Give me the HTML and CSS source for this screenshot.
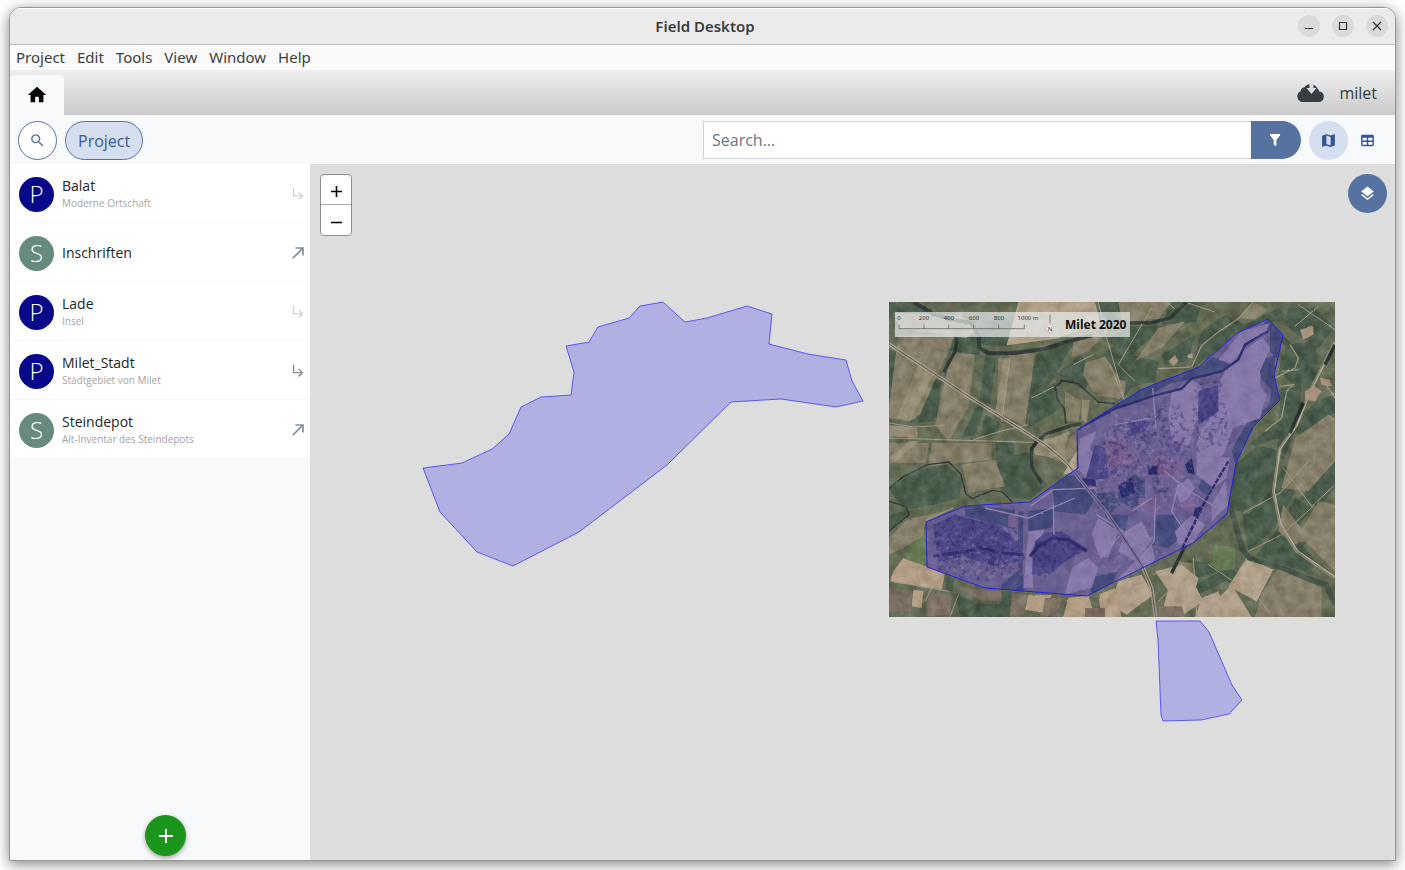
FILE: index.html
```html
<!DOCTYPE html>
<html lang="en">
<head>
<meta charset="utf-8">
<title>Field Desktop</title>
<link rel="stylesheet" href="styles.css">
</head>
<body>
<div class="window">
  <header class="titlebar">
    <h1 class="title">Field Desktop</h1>
    <div class="window-controls">
      <button class="window-button" aria-label="Minimize"><svg viewBox="0 0 22 22"><path d="M7 13.500h8"/></svg></button>
      <button class="window-button" aria-label="Maximize"><svg viewBox="0 0 22 22"><path d="M7.500 7.500h7v7h-7z"/></svg></button>
      <button class="window-button" aria-label="Close"><svg viewBox="0 0 22 22"><path d="M7 7l8 8M15 7l-8 8"/></svg></button>
    </div>
  </header>
  <nav class="menubar">
    <button>Project</button><button>Edit</button><button>Tools</button><button>View</button><button>Window</button><button>Help</button>
  </nav>
  <div class="tabbar">
    <a class="home-tab" href="#" aria-label="Home"><svg viewBox="0 0 24 24"><path d="M10 20V14H14V20H19V12H22L12 3 2 12H5V20Z"/></svg></a>
    <div class="sync">
      <svg class="cloud" viewBox="0 0 27 20"><path d="M6 19A5.700 5.700 0 0 1 3.500 8.200Q4 4.800 7.500 4.300 9 1.500 13 1.200 18 .8 20.500 5.500 21.800 7 22.500 8.500A5.300 5.300 0 0 1 21.500 19Z" fill="#373d43"/><path d="M12.500 0h4v5h3l-5 6-5-6h3z" fill="#dcdcdc"/></svg>
      <span>milet</span>
    </div>
  </div>
  <div class="toolbar">
    <button class="round outlined" aria-label="Find"><svg class="icon" viewBox="0 0 24 24"><path d="M9.500 3A6.500 6.500 0 0 1 16 9.500C16 11.110 15.410 12.590 14.440 13.730L14.710 14H15.500L20.500 19 19 20.500 14 15.500V14.710L13.730 14.440C12.590 15.410 11.110 16 9.500 16A6.500 6.500 0 0 1 9.500 3M9.500 5C7 5 5 7 5 9.500S7 14 9.500 14 14 12 14 9.500 12 5 9.500 5Z"/></svg></button>
    <button class="crumb">Project</button>
    <form class="search">
      <input type="text" placeholder="Search..." aria-label="Search">
      <button type="button" class="filter" aria-label="Filter"><svg class="icon-filter" viewBox="0 0 24 24"><path d="M14 12V19.880C14.040 20.180 13.940 20.500 13.710 20.710 13.320 21.100 12.690 21.100 12.300 20.710L10.290 18.700C10.060 18.470 9.960 18.160 10 17.870V12L4.210 4.620C3.870 4.190 3.950 3.560 4.380 3.220 4.570 3.080 4.780 3 5 3H19C19.220 3 19.430 3.080 19.620 3.220 20.050 3.560 20.130 4.190 19.790 4.620Z"/></svg></button>
    </form>
    <div class="views">
      <button class="round selected" aria-label="Map view"><svg class="icon" viewBox="0 0 24 24"><path d="M15 19L9 16.890V5L15 7.110M20.500 3L15 5.100 9 3 3.360 4.900C3.150 4.970 3 5.150 3 5.380V20.500A.5.5 0 0 0 3.660 20.970L9 18.900 15 21 20.640 19.100C20.850 19 21 18.850 21 18.620V3.500A.5.5 0 0 0 20.500 3Z"/></svg></button>
      <button class="round" aria-label="Table view"><svg class="icon" viewBox="0 0 24 24"><path d="M5 4H19A2 2 0 0 1 21 6V18A2 2 0 0 1 19 20H5A2 2 0 0 1 3 18V6A2 2 0 0 1 5 4M5 8V12H11V8H5M13 8V12H19V8H13M5 14V18H11V14H5M13 14V18H19V14H13Z"/></svg></button>
    </div>
  </div>
  <main class="content">
    <aside class="sidebar">
      <ul class="list">
        <li class="row"><span class="badge place">P</span><div class="label"><strong>Balat</strong><small>Moderne Ortschaft</small></div><button class="go faded" aria-label="Show children of Balat"><svg class="icon" viewBox="0 0 24 24"><path d="M19 15L13 21 11.580 19.580 15.170 16H4V4H6V14H15.170L11.580 10.420 13 9Z"/></svg></button></li>
        <li class="row"><span class="badge store">S</span><div class="label"><strong>Inschriften</strong></div><button class="go" aria-label="Open Inschriften"><svg class="icon-big" viewBox="0 0 24 24"><path d="M5 17.590L15.590 7H9V5H19V15H17V8.410L6.410 19Z"/></svg></button></li>
        <li class="row"><span class="badge place">P</span><div class="label"><strong>Lade</strong><small>Insel</small></div><button class="go faded" aria-label="Show children of Lade"><svg class="icon" viewBox="0 0 24 24"><path d="M19 15L13 21 11.580 19.580 15.170 16H4V4H6V14H15.170L11.580 10.420 13 9Z"/></svg></button></li>
        <li class="row"><span class="badge place">P</span><div class="label"><strong>Milet_Stadt</strong><small>Stadtgebiet von Milet</small></div><button class="go" aria-label="Show children of Milet_Stadt"><svg class="icon" viewBox="0 0 24 24"><path d="M19 15L13 21 11.580 19.580 15.170 16H4V4H6V14H15.170L11.580 10.420 13 9Z"/></svg></button></li>
        <li class="row"><span class="badge store">S</span><div class="label"><strong>Steindepot</strong><small>Alt-Inventar des Steindepots</small></div><button class="go" aria-label="Open Steindepot"><svg class="icon-big" viewBox="0 0 24 24"><path d="M5 17.590L15.590 7H9V5H19V15H17V8.410L6.410 19Z"/></svg></button></li>
      </ul>
      <button class="add" aria-label="Add resource"><svg viewBox="0 0 24 24"><path d="M12 5v14M5 12h14"/></svg></button>
    </aside>
    <section class="map" aria-label="Map">
      <svg class="canvas" viewBox="310 164 1085 696">
        <defs>
          <clipPath id="frame"><path d="M12 12h1338v945H12z"/></clipPath>
          <clipPath id="city"><path d="M576 396L675 333 767 276 810 257 943 206 1055 104 1150 63 1193 110 1166 230 1185 306 1103 386 1053 495 1025 648 925 734 675 859 605 893 300 871 127 807 124 671 240 625 435 611 580 511Z"/></clipPath>
          <filter id="grain" x="0" y="0" width="100%" height="100%" color-interpolation-filters="sRGB"><feTurbulence type="fractalNoise" baseFrequency=".03" numOctaves="5" seed="8"/><feColorMatrix values="1 1 0 0 -.5 1 1 0 0 -.5 1 1 0 0 -.5 0 0 0 0 1"/></filter>
          <filter id="ruins" x="0" y="0" width="100%" height="100%" color-interpolation-filters="sRGB"><feTurbulence type="fractalNoise" baseFrequency=".07" numOctaves="4" seed="21"/><feColorMatrix values="0 0 0 0 .2 0 0 0 0 .19 0 0 0 0 .27 5 0 0 0 -2.500" result="c"/><feComposite in="c" in2="SourceGraphic" operator="in"/></filter>
          <filter id="specks" x="0" y="0" width="100%" height="100%" color-interpolation-filters="sRGB"><feTurbulence type="fractalNoise" baseFrequency=".07" numOctaves="4" seed="40"/><feColorMatrix values="0 0 0 0 .8 0 0 0 0 .73 0 0 0 0 .68 0 6 0 0 -3.300" result="c"/><feComposite in="c" in2="SourceGraphic" operator="in"/></filter>
          <filter id="rough" x="-5%" y="-5%" width="110%" height="110%" color-interpolation-filters="sRGB"><feTurbulence type="fractalNoise" baseFrequency=".03" numOctaves="3" seed="3"/><feDisplacementMap in="SourceGraphic" scale="5" xChannelSelector="R" yChannelSelector="G"/><feGaussianBlur stdDeviation="1.500"/></filter>
        </defs>
        <g transform="translate(885 298) scale(.333333)">
          <g clip-path="url(#frame)">
            <g filter="url(#rough)">
            <path fill="#636b55" d="M0 0h1370v970H0z"/>
            <g fill="#4a5c4b">
              <path d="M12 12h75l50 40-107 0-18 10zM12 150l100 70L12 300zM120 230l50 20-15 110-60 10zM100 265l60 0-15 105-70 5zM210 110l65 0 10 60-60 10-40 60-10-20zM300 178l35 2-20 140-30-15zM270 330l30-10-30 90-40 10zM455 165l120-45-70 120-70 100-20 50zM440 290l70-35 20 75-100 60zM280 80l110-30-20 95-80-5zM300 350l45 25-10 35-50 5zM330 430l60 5-5 60-50-10zM510 230l80-60 30 60-20 50-80-50zM640 12h80l-20 65-55 0zM735 85h100l-110 100-60-60zM640 185l50-50 90 80-60 80-30-60zM830 170l100-60-20 80-70 10zM730 170l90 20-10 60-80 20z"/>
              <path d="M12 570l90-55 80-15 50 40-10 60-75 20-90 15-20-25zM12 650l50-10-5 30-45 25zM185 835l25 5-8 40-20-5zM212 885l60 30 70 5 5 37H225zM350 480l90-20 10 60 40 40-60 45-60-10-60-60zM350 880l30 0-5 77-40 0z"/>
              <path d="M860 12l90 0-15 60-110 10zM950 100l70-50 60 30 100-50 40 40-80 0-90 50-80 60-50 30zM1210 30h80l60 60-50 60-50-30-50-40zM1200 140l90-10 10 80-60 60-40-30zM1190 170l50 30-20 40-40-10zM1190 270l60-5-10 100-60 90-90-15 90-70zM1255 200l50 10-20 60-30 0zM1180 420l-60 20-70 60-10 130 50 20 80-100zM1200 500l30 80-60 110-80 70-20-120 60-30zM1180 690l30 0 90 110-40 20-150-45zM1290 310l60-20v60l-100 60-30-10zM1245 600l105-120v90l-50 60zM1230 600l50 30-50 70-40-30z"/>
              <path d="M930 860l100-50 30 20-120 60zM870 800l50-15 0 45-40 10zM1020 805l30 15 0 40-25-10zM925 790l60 5 20 25-70 20z"/>
            </g>
            <g fill="#857f6a">
              <path d="M40 110h170L105 350l-30 20-63-10v-30zM200 160l70 10-20 160-60 100-40-50zM340 182l110-10-25 130-5 80-85-40zM370 170l80-5-30 220-40-20zM570 90l90-30 10 40-60 60-50 20zM540 280l50 30-10 60-40 0zM600 195l60-20 40 60 5 70-80-25-30-50zM470 470l105-65v60l-40 30zM12 435h120l-10 60H12zM140 435h180l0 50-190 20zM230 500l100-15 30 80-110 20zM700 12h160l-40 50-110 10z"/>
              <path d="M80 660l100-20-60 40-10 60-50 0zM12 720l60-60 40 60-100 50zM820 90l80-20-70 80-80 40zM675 240l50 10-10 50-80-5zM1060 60l50-45 40 20-40 30zM1230 420l100-70 20 10v130l-80 90-80-10zM1195 620l60 80 30 20-60 20-45-40zM1300 610l50 10v200l-110-110zM1180 810l70 30 60 30v87h-200l20-70zM870 790l60 5-30 60-20 0z"/>
            </g>
            <g fill="#958c76">
              <path d="M100 200l50 20L75 370l-40-10zM355 185l20 0-25 180-20-15zM590 305l25 0-10 70-15-10zM445 440l110-40-15 45 0 40-90-15zM12 380l85 10v30l-85-5zM28 45l200 5 45 50-30 20-200-30zM12 480l60-50 30 0-70 60z"/>
            </g>
            <g fill="#b0a08a">
              <path d="M400 12h230l15 60-130 50-150 20zM555 490l20-30 0 60-40 10zM1085 780l80 35-50 95-85-45zM1000 900l40-40 60 97h-90zM810 820l80-20 50 40-10 40-80 0zM850 870l85 0 20 40-60 40-60-20zM700 850l70-20 35 60-80 60-50-30zM950 900l50-20 30 77h-100z"/>
            </g>
            <g fill="#b39d85">
              <path d="M55 780l125 45-10 50-155-25 10-30zM550 900l60-8 20 65h-95zM640 890l50-20 20 87h-60zM85 875l30 5-5 50-30-5zM430 890l70 0-20 55-60-10z"/>
            </g>
            <g fill="#7b6f61"><path d="M12 870l70 10-5 60H12zM230 870l120 10 0 30-60 0zM380 890l50 0-15 60H375zM130 890l70 0-5 60-75 5zM820 925l70 0 10 32h-80zM480 900l50 0-10 55h-50zM600 930h60v27h-60z"/></g>
            <path fill="#657a52" d="M75 735l45-20 5 90-60-20zM990 740l60 10 0 60-40 10-35-20z"/>
            <g fill="none" stroke="#a59a84" stroke-width="3">
              <path d="M12 420l260 8 180 5M265 425l80-25 85-20M12 375l75 12 90-5M375 182l-25 190M640 12l20 90 55 190M800 30l-100 170 50 50M675 200l45 110M900 12l90 30M845 12l25 20M1230 85l70-60M1240 20l110 75M1190 220l50-5M1075 645l110-60 90-100M1195 510l85 115 65-60M1090 760l100-50 100-90M925 780l10 175M1095 865l60 80M860 870l-40 40M20 850l170 30M100 800l-10 60M220 890l-25 67M140 870l-20 40M805 830l60-20M970 800l90 60M440 300l80-40M565 200l60-30"/>
            </g>
            <g fill="none" stroke="#333c38" stroke-linejoin="round">
              <path stroke-width="12" d="M85 12l60 35 55 18 60 10 22 40 0 35 30 16 70 0 100-14 60-20 80-20"/>
              <path stroke-width="10" d="M735 75l60 0 60-15 50-48M215 118l-4 40-35 65"/>
              <path stroke-width="5" d="M690 317l-50-5-60-55-50-10-20 20 8 40 20 25 5 45"/>
              <path stroke-width="10" d="M590 377l-30 5-75 25-30 25-15 20 0 55 30 50"/>
              <path stroke-width="4" d="M12 570l45-35 70-35 65-8 35 35 15 60 20 15 60-25 30 5 25 25 20 30M12 700l60-50-10-25-50-15"/>
            </g>
            <path fill="none" stroke="#465648" stroke-width="16" d="M1050 480l-12 150 35 125 20 25 100 30 70 30 60 20 27 60M1190 120l50 50 60 70M1255 312l-65 170"/>
            <path fill="none" stroke="#a0947c" stroke-width="4" d="M1105 12l-45 50-60 40-50 40-30 65-100 5M1185 265l40-5-20 20-15 80-50 40M1215 140l25 40-10 30-60 30M125 665l80-35M1350 300l-40-60"/>
            <path fill="none" stroke="#8a8471" stroke-width="9" d="M1350 130l-75 150-40 100-50 70-20 130 20 100 50 80 115 80"/>
            <path fill="none" stroke="#beb3a0" stroke-width="3" d="M1350 135l-75 150-40 100-50 70-17 125 20 98 50 80 115 80"/>
            <path fill="none" stroke="#29332f" stroke-width="10" d="M1255 315l-40 90M1350 140l-30 60M900 745l-40 80"/>
            <path fill="#a8937f" d="M1260 280l30-15 20 15-20 30-30-5zM1245 95l40-10 0 25-30 15zM850 190l20-20 10 20-15 15zM908 170l15-5 0 15-15 0zM735 840l30-5 5 25-30 5zM1305 240l30 5 5 20-30-5z"/>
            </g>
            <g clip-path="url(#city)">
              <g filter="url(#rough)">
              <path fill="#8d8280" d="M0 0h1370v970H0z"/>
              <g fill="#586660"><path d="M576 396l100-65 100-65 170-60 40-30 50 30-70 30-110 20-90 55-190 60zM1145 60l50 50-20 70-20-20 0-60-20-20zM1120 190l50-20 0 50 20 80-80 85-60 110-10-40 50-90 60-40 10-50-30-30zM975 185l25-5 35 20-20 20-60 15zM500 540l80-10 60 60-40 60-90-10zM430 640l80-10-10 60-70 10zM240 620l150 15 0 60-150-40zM625 590l60-10 20 40-40 40zM700 560l50-30 30 20 0 60-40 20-40-20zM810 650l60 0 40 50-60 50-50-10zM950 540l40-10-20 70-30-30zM350 860l60-50 10 80h-70zM400 640l15 0-2 180-15-20zM670 650l60 0-10 60zM610 840l90-20-20 40-60 30z"/></g>
              <g fill="#b5a6a2"><path d="M1000 185l70-85 85-25-15 30-50 30-50 60zM1025 210l60-60 50-30 20 30-30 70 0 40 20 30-20 70-80 30-30 80-50 30-30-60 40-130zM860 280l60-35 30 20-10 80-30 100-50-20-10-70zM585 420l50-20-20 50 40 70 0 30-50-10-30-30zM935 460l100 20-10 60-40 30-50-40zM430 700l50-5-40 60 5 115-30 0zM640 660l60 40-30 80-30-10-20-60zM720 700l50-30 30 60-50 60-50-30zM740 800l60-60 10 40-30 70-110 20zM560 810l50-30 30 30-20 60-80 20zM870 570l40-30 20 30-40 60zM870 700l50-50 40 30-40 60-40 0zM980 620l40-70 10 70-50 50z"/></g>
              <g fill="#a0827f"><path d="M370 650l25 0 0 40-25-5zM660 430l50-20 50 80-90 20zM800 470l80 10 20 40-40 20-70-20zM885 615l30-15 30 30-30 20zM760 600l60 0-10 40-50-10z"/></g>
              <g fill="#625e70"><path d="M145 680l65-30 60 15 80 20 60 60 10 40-90 20-100-30-70 20zM450 730l30-25 50-5 80 55-50 20-60 50-60 5zM940 280l60-20 0 80-60 40zM630 440l30 10 10 90-70 10zM740 370l60 0-20 30-60 20zM700 560l50-25 10 60-40 10z"/></g>
              <path fill="none" stroke="#c1b6ac" stroke-width="4" d="M812 600l-5 130-50 60M435 625l70-50 130-5M505 620l2 90M645 780l70-80-80-50M690 380l110-20M300 630l130 30 140-60M880 560l-20 80 60 90M740 640l60-40M840 520l60 50 80 50M803 270l10 120"/>
              <path fill="none" stroke="#39404d" stroke-width="7" d="M580 392l110-60 120-40 80-20 30-30 90-22 50-35 20-45 50-30 20-10"/>
              <path fill="none" stroke="#3d3b4f" stroke-width="9" d="M145 775l100-15 45-10 55 15 70 5M435 775l25-30 40-25 50 5 55 35"/>
              <path fill="none" stroke="#3b3a48" stroke-width="7" stroke-dasharray="16 4" d="M1030 490l-70 120-105 215"/>
              <path fill="#323c4b" d="M700 565l40-25 10 45-40 15zM787 505l30 0 0 25-25 0zM585 540l45 5 5 20-50-5zM900 500l20-20 10 50-20-5zM930 630l20-5-10 30-15 0z"/>
              </g>
              <path filter="url(#ruins)" opacity=".42" d="M145 680l80-30 170 50 15 110-110 45-150-30zM440 750l50-50 120 60-70 30-60 50-30-10zM650 400l230-90 50 140-60 60-100 50-110-40zM930 260l80-15 30 190-80 20-40-90zM800 540l50 0 0 60-40 0z"/>
              <path filter="url(#specks)" opacity=".35" d="M150 690h260v150H150zM660 360l240-80 90 180-60 180H620zM620 680h200v150H620z"/>
            </g>
            <path fill="none" stroke="#a49b8a" stroke-width="11" d="M12 138L250 295 410 395 480 440 545 495 670 650 770 800 800 870 812 957"/>
            <path fill="none" stroke="#5c5551" stroke-width="3" d="M12 138L250 295 410 395 480 440 545 495 670 650 770 800 800 870 812 957"/>
            <path class="relief" filter="url(#grain)" d="M12 12h1338v945H12z"/>
            <path fill="#e8ecec" opacity=".7" d="M30 42h705v75H30z"/>
            <path fill="none" stroke="#555" stroke-width="2" d="M42 80v12h376V80M117 80v12M191 80v12M266 80v12M341 80v12M495 50v26"/>
            <path fill="#fff" fill-opacity=".5" stroke="#999" stroke-width="1" d="M480 92l15-14 15 14-15 14z"/>
          </g>
        </g>
        <g class="scale-text"><text x="899" y="320">0</text><text x="924" y="320">200</text><text x="949" y="320">400</text><text x="974" y="320">600</text><text x="999" y="320">800</text><text x="1028" y="320">1000 m</text><text x="1050" y="331">N</text></g>
        <text class="map-title" x="1065" y="329">Milet 2020</text>
        <path class="area over-image" d="M1077 430L1110 409 1141 390 1155 384 1199 367 1237 333 1268 319 1283 335 1274 375 1280 400 1253 427 1236 463 1227 514 1193 543 1110 584 1087 596 985 588 927 567 926 522 965 506 1030 502 1078 468Z"/>
        <path class="area" d="M423 468L462 463 492 449 509 434 521 407 541 397 571 395 574 372 566 346 589 342 598 327 629 318 640 306 663 302 685 322 707 318 747 306 772 314 769 344 808 354 846 360 852 381 863 401 836 407 781 399 731 402 667 465 579 532 513 566 477 552 440 512Z"/>
        <path class="area" d="M1156 621H1200L1209 632 1232 685 1242 700 1229 714 1201 720 1163 721 1161 715 1158 640Z"/>
      </svg>
      <div class="zoom"><button aria-label="Zoom in"><svg viewBox="0 0 30 29"><path d="M15.500 11v11M10 16.500h11"/></svg></button><button aria-label="Zoom out"><svg viewBox="0 0 30 29"><path d="M10 16.500h11"/></svg></button></div>
      <button class="round layers" aria-label="Layers"><svg viewBox="0 0 24 24"><path d="M12 16L19.360 10.270 21 9 12 2 3 9 4.630 10.270M12 18.540L4.620 12.810 3 14.070 12 21.070 21 14.070 19.370 12.800Z"/></svg></button>
    </section>
  </main>
</div>
</body>
</html>
```
FILE: styles.css
```css
* { box-sizing: border-box; }
body {
  margin: 0;
  height: 100vh;
  padding: 7px 9px 9px;
  display: flex;
  overflow: hidden;
  background: #fff;
  color: #212529;
  font-family: "Open Sans", "Noto Sans", sans-serif;
  font-size: 16px;
}
button { margin: 0; padding: 0; border: 0; background: none; color: inherit; font: inherit; }
svg { display: block; fill: currentColor; }

.window {
  flex: 1;
  min-width: 0;
  display: flex;
  flex-direction: column;
  overflow: hidden;
  border: 1px solid #979797;
  border-radius: 12px 12px 0 0;
  background: #f8f9fb;
  box-shadow: 0 3px 14px rgba(0, 0, 0, .5);
}
.titlebar {
  display: grid;
  grid-template-columns: 1fr auto 1fr;
  align-items: center;
  height: 37px;
  padding: 0 7px 1px 12px;
  border-top: 1px solid #fff;
  border-bottom: 1px solid #bababa;
  background: #ebebeb;
  color: #3d3d3d;
}
.title { grid-column: 2; margin: 0; font: 600 15px/20px "Noto Sans", sans-serif; }
.window-controls { display: flex; justify-content: flex-end; gap: 12px; }
.window-button { width: 22px; height: 22px; border-radius: 50%; background: #dadada; }
.window-button svg { fill: none; stroke: #333; stroke-width: 1.2; }
.menubar {
  display: flex;
  align-items: center;
  gap: 12px;
  height: 25px;
  padding: 0 0 2px 6px;
  background: #fafafa;
  color: #3d3d3d;
  font: 15px/20px "Noto Sans", sans-serif;
}
.tabbar {
  display: flex;
  align-items: flex-end;
  justify-content: space-between;
  height: 45px;
  background: linear-gradient(#eee, #cacaca);
}
.home-tab {
  display: grid;
  place-items: center;
  width: 54px;
  height: 40px;
  border-radius: 4px 4px 0 0;
  background: #f8f9fb;
  color: #000;
}
.home-tab svg { width: 22px; height: 22px; }
.sync { display: flex; align-items: center; gap: 15px; height: 45px; padding-right: 18px; color: #373d43; }
.cloud { width: 27px; height: 20px; }

.toolbar { display: flex; align-items: center; gap: 8px; height: 49px; padding: 2px 8px 0; color: #2f5597; }
.round { display: grid; place-items: center; flex: none; width: 39px; height: 39px; border-radius: 50%; }
.icon { width: 17px; height: 17px; }
.icon-filter { width: 16px; height: 16px; }
.icon-big { width: 20px; height: 20px; }
.outlined { border: 1px solid #5572a1; background: #fff; color: #5572a1; }
.crumb { height: 39px; padding: 0 12px; border: 1px solid #5572a1; border-radius: 20px; background: #d6dff0; color: #375a94; }
.search { display: flex; width: 598px; height: 39px; padding-bottom: 1px; margin-left: auto; }
.search input {
  flex: 1;
  min-width: 0;
  padding: 0 8px;
  border: 1px solid #ced4da;
  border-right: 0;
  border-radius: 0;
  background: #fff;
  font: inherit;
}
.search input::placeholder { color: #6c757d; opacity: 1; }
.filter { display: grid; place-items: center; width: 50px; padding-right: 2px; border-radius: 0 19px 19px 0; background: #5572a1; color: #fff; }
.views { display: flex; }
.selected { background: #d6dff0; }

.content { flex: 1; min-height: 0; display: flex; }
.sidebar { flex: none; width: 300px; display: flex; flex-direction: column; justify-content: space-between; align-items: center; padding-bottom: 4px; }
.list { width: 100%; margin: 0; padding: 0; list-style: none; }
.row { display: flex; align-items: center; height: 59px; padding: 3px 0 0 9px; border-bottom: 1px solid #f5f6f7; background: #fff; }
.badge { width: 35px; height: 35px; border-radius: 50%; color: #fff; font-size: 24px; font-weight: 300; line-height: 34px; text-align: center; }
.place { background: #08088a; }
.store { background: #668b7e; }
.label { flex: 1; padding: 0 0 2px 8px; }
.label strong { display: block; font-size: 14px; font-weight: 400; line-height: 18px; }
.label small { display: block; color: #a3a3a3; font-size: 10px; line-height: 16px; }
.go { display: grid; place-items: center; width: 24px; height: 24px; padding-bottom: 2px; color: #868e99; }
.faded { color: #d2d3d5; }
.add { display: grid; place-items: center; width: 41px; height: 41px; margin-left: 11px; border-radius: 50%; background: #1c951c; box-shadow: 0 2px 5px rgba(0, 0, 0, .35); }
.add svg { width: 24px; height: 24px; fill: none; stroke: #fff; stroke-width: 2; }

.map { flex: 1; min-width: 0; position: relative; background: #ddd; }
.canvas { width: 100%; height: 100%; }
.relief { mix-blend-mode: soft-light; opacity: .3; }
.area { fill: #00f; fill-opacity: .2; stroke: #00f; stroke-opacity: .55; stroke-width: 1; }
.over-image { fill: #1a10b8; fill-opacity: .3; stroke: #1c1cf0; stroke-opacity: .9; }
.scale-text { fill: #333; font: 6px "Noto Sans", sans-serif; text-anchor: middle; }
.map-title { fill: #111; font: 700 12px "Noto Sans", sans-serif; }
.zoom { position: absolute; top: 10px; left: 10px; overflow: hidden; width: 32px; border: 1px solid #8e8e8e; border-radius: 4px; background: #fff; }
.zoom button { display: block; width: 30px; height: 30px; color: #000; }
.zoom button:first-child { border-bottom: 1px solid #aaa; }
.zoom svg { width: 30px; height: 29px; fill: none; stroke: #000; stroke-width: 1.6; }
.layers { position: absolute; top: 10px; right: 8px; background: #5572a1; color: #fff; }
.layers svg { width: 17px; height: 17px; }
```
